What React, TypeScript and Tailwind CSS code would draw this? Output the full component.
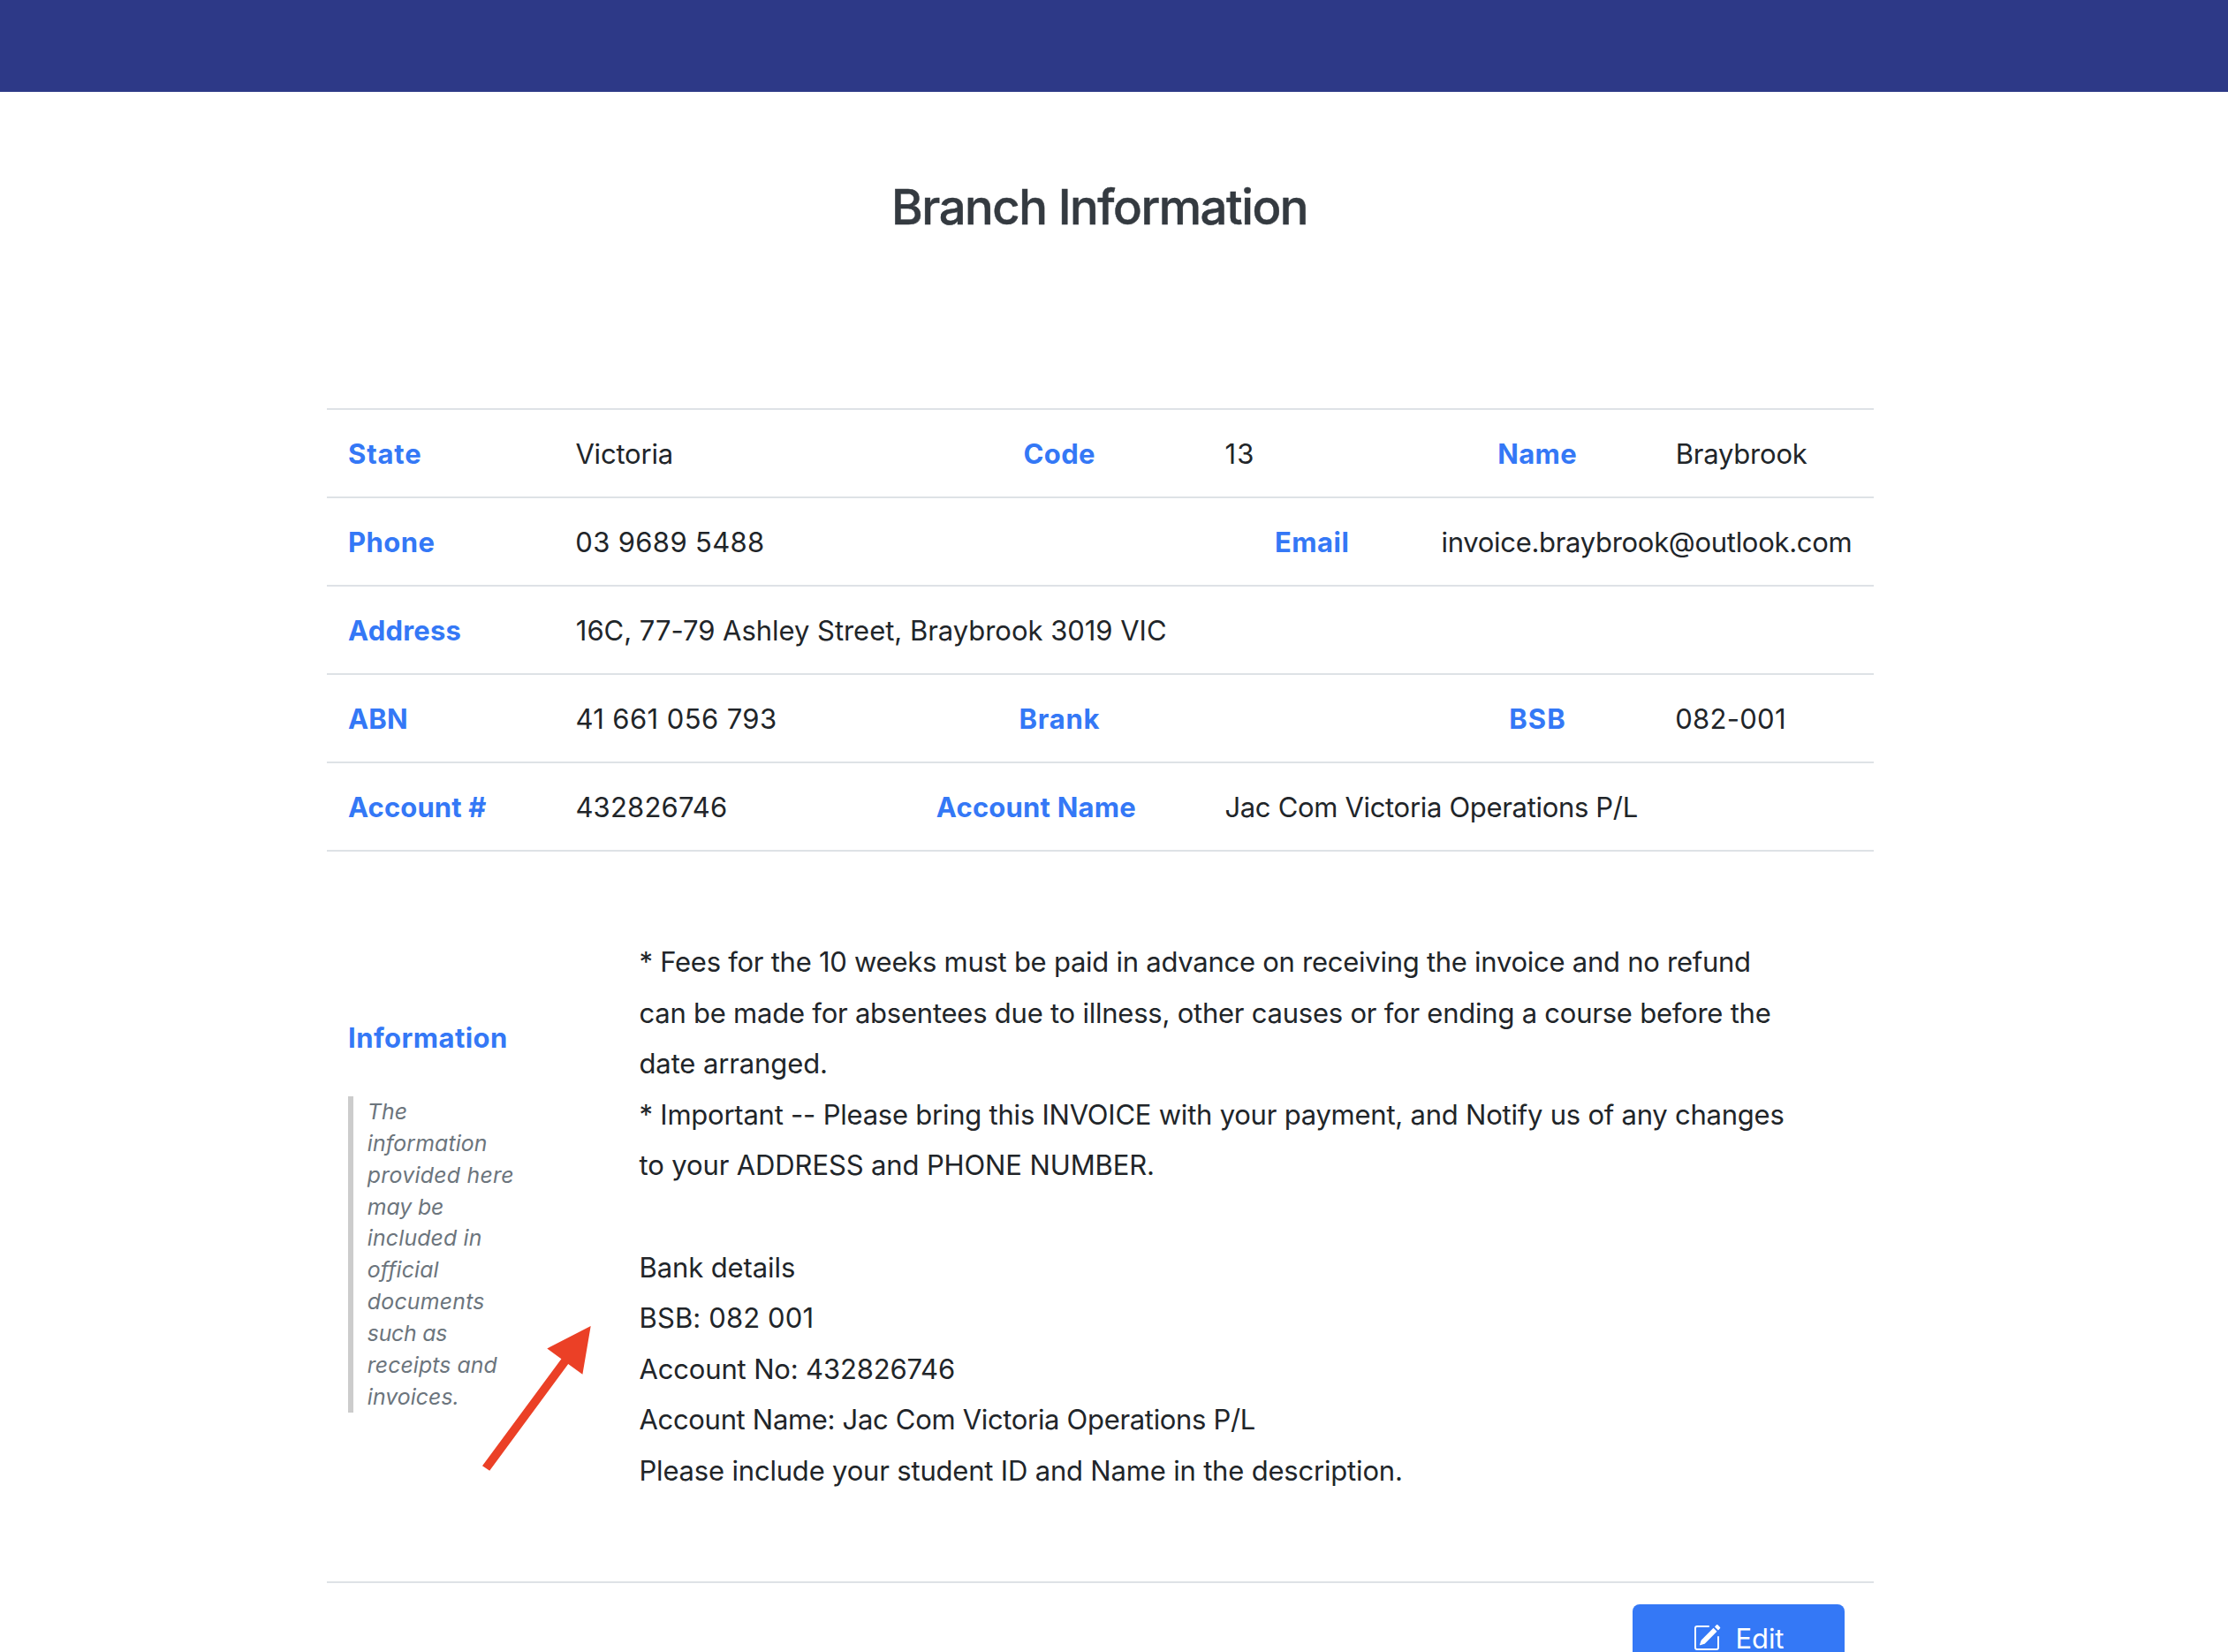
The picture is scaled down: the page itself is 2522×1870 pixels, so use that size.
import { BsPencilSquare } from 'react-icons/bs';

type Cell = { text: string; label?: boolean; cls: string };

const rows: Cell[][] = [
  [
    { text: 'State', label: true, cls: 'w-[257.4px] tracking-[0.838px]' },
    { text: 'Victoria', cls: 'w-[507.2px] tracking-[-0.2px]' },
    { text: 'Code', label: true, cls: 'w-[227.8px] tracking-[0.305px]' },
    { text: '13', cls: 'w-[308.9px] tracking-[1.39px]' },
    { text: 'Name', label: true, cls: 'w-[201.5px] tracking-[0.361px]' },
    { text: 'Braybrook', cls: 'tracking-[-0.224px]' },
  ],
  [
    { text: 'Phone', label: true, cls: 'w-[257.3px] tracking-[0.45px]' },
    { text: '03 9689 5488', cls: 'w-[791.6px] tracking-[0.34px]' },
    { text: 'Email', label: true, cls: 'w-[188.6px] tracking-[0.5px]' },
    { text: 'invoice.braybrook@outlook.com', cls: 'tracking-[-0.301px]' },
  ],
  [
    { text: 'Address', label: true, cls: 'w-[257.8px] tracking-[0.215px]' },
    { text: '16C, 77-79 Ashley Street, Braybrook 3019 VIC', cls: 'tracking-[-0.03px]' },
  ],
  [
    { text: 'ABN', label: true, cls: 'w-[257.4px] tracking-[0.2px]' },
    { text: '41 661 056 793', cls: 'w-[502.2px] tracking-[0.4px]' },
    { text: 'Brank', label: true, cls: 'w-[554.7px] tracking-[0.7px]' },
    { text: 'BSB', label: true, cls: 'w-[187.9px] tracking-[1.046px]' },
    { text: '082-001', cls: 'tracking-[0.3px]' },
  ],
  [
    { text: 'Account #', label: true, cls: 'w-[257.4px] tracking-[0.12px]' },
    { text: '432826746', cls: 'w-[408.4px] tracking-[0.193px]' },
    { text: 'Account Name', label: true, cls: 'w-[326.6px] tracking-[0.22px]' },
    { text: 'Jac Com Victoria Operations P/L', cls: 'tracking-[-0.32px]' },
  ],
];

const details: [string, string][] = [
  ['* Fees for the 10 weeks must be paid in advance on receiving the invoice and no refund', 'tracking-[-0.262px]'],
  ['can be made for absentees due to illness, other causes or for ending a course before the', 'tracking-[-0.231px]'],
  ['date arranged.', 'tracking-[-0.119px]'],
  ['* Important -- Please bring this INVOICE with your payment, and Notify us of any changes', 'tracking-[-0.229px]'],
  ['to your ADDRESS and PHONE NUMBER.', 'tracking-[-0.123px]'],
  ['', ''],
  ['Bank details', 'tracking-[-0.1px]'],
  ['BSB: 082 001', 'tracking-[0.12px]'],
  ['Account No: 432826746', 'tracking-[-0.158px]'],
  ['Account Name: Jac Com Victoria Operations P/L', 'tracking-[-0.32px]'],
  ['Please include your student ID and Name in the description.', 'tracking-[-0.187px]'],
];

const note: [string, string][] = [
  ['The', 'tracking-[0.153px]'],
  ['information', 'tracking-[0.12px]'],
  ['provided here', 'tracking-[0.292px]'],
  ['may be', 'tracking-[-0.097px]'],
  ['included in', 'tracking-[0.18px]'],
  ['official', 'tracking-[0.122px]'],
  ['documents', 'tracking-[0.252px]'],
  ['such as', 'tracking-[-0.214px]'],
  ['receipts and', 'tracking-[0.09px]'],
  ['invoices.', 'tracking-[0.075px]'],
];

function Arrow() {
  return (
    <svg className="absolute left-[540px] top-[1490px] h-[180px] w-[140px]" viewBox="540 1490 140 180">
      <path
        d="M668.7 1501 L619.3 1526.4 L635.4 1538.2 L546 1659.2 L554.2 1664.8 L643.2 1544 L659.4 1555.8 Z"
        fill="#eb4026"
      />
    </svg>
  );
}

export default function App() {
  return (
    <div className="relative h-[1870px] w-full overflow-hidden bg-white font-['Inter',sans-serif] text-[31px] text-[#212529]">
      <header className="h-[104px] bg-[#2d3987]" />
      <main className="ml-[370px] w-[1751px]">
        <h1 className="mt-24 h-[262px] pl-[639px] text-[54.4px] leading-[68px] font-medium tracking-[-1.44px] whitespace-nowrap text-[#343a40] [-webkit-text-stroke:0.5px_#343a40]">
          Branch Information
        </h1>
        <div className="border-t-2 border-[#dee2e6]">
          {rows.map((row, i) => (
            <div key={i} className="flex h-[100px] border-b-2 border-[#dee2e6] pl-6 leading-[100px] whitespace-nowrap">
              {row.map((c) => (
                <div key={c.text} className={`shrink-0 ${c.cls} ${c.label ? 'font-bold text-[#3478f6]' : ''}`}>
                  {c.text}
                </div>
              ))}
            </div>
          ))}
        </div>
        <section className="flex h-[828px] border-b-2 border-[#dee2e6] pl-6 whitespace-nowrap">
          <div className="w-[329.5px] shrink-0 pt-[187px]">
            <h2 className="leading-[48px] font-bold tracking-[0.44px] text-[#3478f6]">Information</h2>
            <blockquote className="mt-[42px] border-l-[6px] border-[#cccccc] pl-[15.8px] text-[24.8px] leading-[35.84px] text-[#6c757d] italic">
              {note.map(([t, c]) => (
                <p key={t} className={c}>{t}</p>
              ))}
            </blockquote>
          </div>
          <div className="pt-24 leading-[57.6px]">
            {details.map(([t, c], i) => (
              <p key={i} className={`h-[57.6px] ${c}`}>{t}</p>
            ))}
          </div>
        </section>
        <div className="flex justify-end pt-6 pr-[33px]">
          <button className="flex h-[76px] w-[240px] rounded-lg bg-[#3478f6] pl-[68px] text-white">
            <BsPencilSquare className="mt-[22px] size-8" />
            <span className="mt-[15px] ml-[16.5px] leading-[48px] tracking-[-0.108px]">Edit</span>
          </button>
        </div>
      </main>
      <Arrow />
    </div>
  );
}
